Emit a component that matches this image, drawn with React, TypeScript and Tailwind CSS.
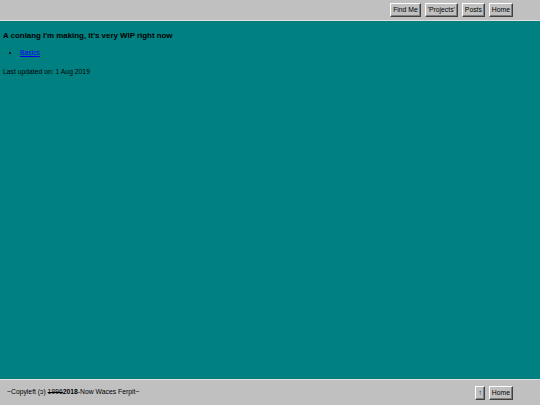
import React from "react";

const btn =
  "bg-[#c0c0c0] text-black px-[2px] h-[14px] leading-[12px] text-[6.8px] border border-t-white border-l-white border-r-[#404040] border-b-[#404040] shadow-[inset_-1px_-1px_0_#808080]";

export default function App() {
  return (
    <div
      className="w-[540px] h-[405px] flex flex-col bg-[#008080] text-black"
      style={{ fontFamily: '"Liberation Sans", Arial, sans-serif' }}
    >
      <div className="h-[21px] bg-[#c0c0c0] border-b border-[#dfdfdf] flex items-center justify-end pr-[27px] gap-[4px] shrink-0">
        <button className={btn}>Find Me</button>
        <button className={btn}>'Projects'</button>
        <button className={btn}>Posts</button>
        <button className={btn}>Home</button>
      </div>
      <div className="flex-1 px-[3px] pt-[10px]">
        <h3 className="text-[7.9px] font-bold leading-[9px]">
          A conlang I'm making, it's very WIP right now
        </h3>
        <ul className="list-disc pl-[17px] mt-[9px] text-[6.8px] leading-[8px]">
          <li>
            <a href="#" className="text-[#0000ee] underline">
              Basics
            </a>
          </li>
        </ul>
        <p className="text-[6.8px] leading-[8px] mt-[11px]">Last updated on: 1 Aug 2019</p>
      </div>
      <div className="h-[26px] bg-[#c0c0c0] border-t border-[#dfdfdf] flex items-center pl-[7px] pr-[27px] shrink-0">
        <span className="text-[6.8px] flex-1">
          ~Copyleft (ɔ) <s>1996</s>
          <b>2018</b>-Now Waces Ferpit~
        </span>
        <div className="flex gap-[4px]">
          <button className={btn}>↑</button>
          <button className={btn}>Home</button>
        </div>
      </div>
    </div>
  );
}
